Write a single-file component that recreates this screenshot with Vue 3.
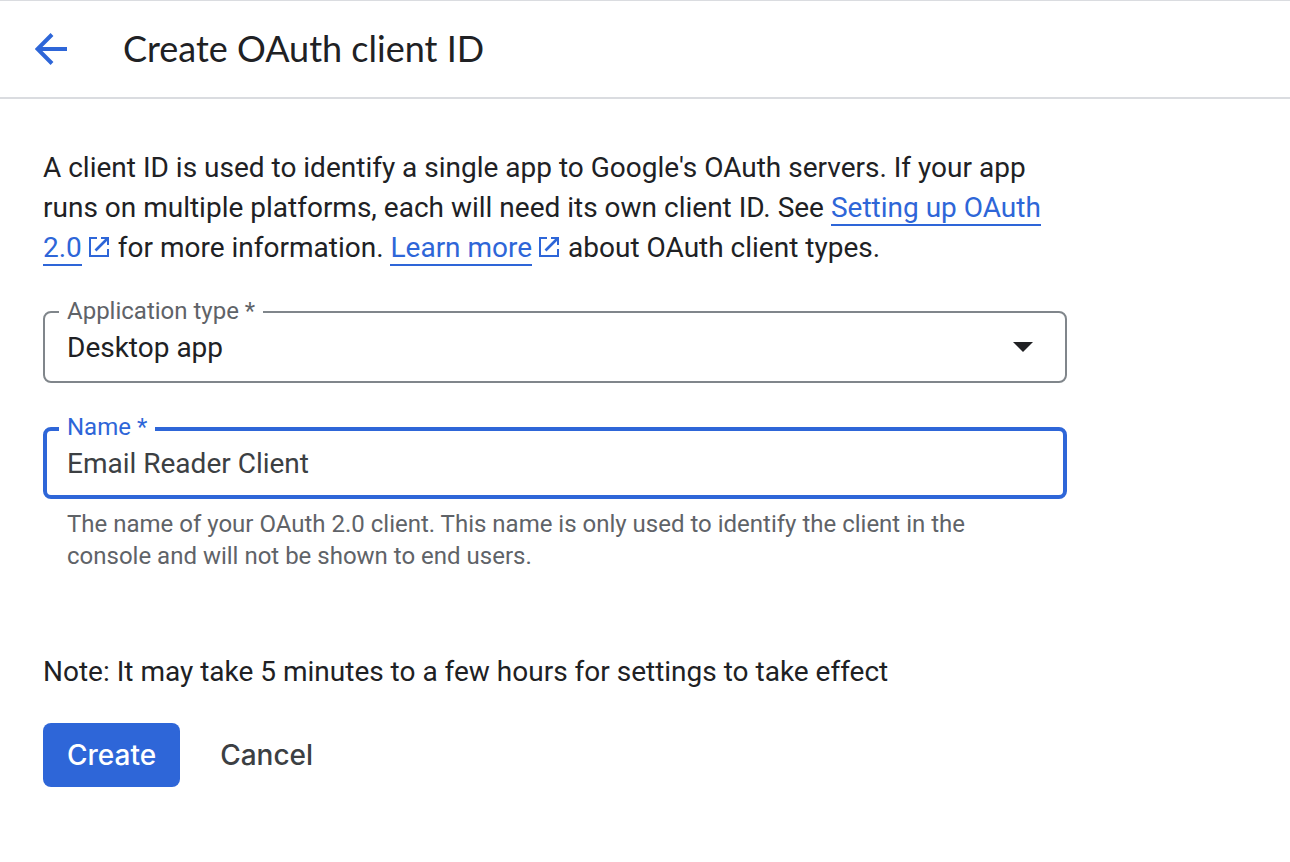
<script setup>
import { ref } from 'vue'

const appType = ref('Desktop app')
const clientName = ref('Email Reader Client')
</script>

<template>
  <div class="page">
    <header class="bar">
      <button class="back" type="button" aria-label="Back">
        <svg viewBox="0 0 32 32" width="32" height="32" aria-hidden="true">
          <path d="M32 16H3M17 1.500L2.500 16L17 30.500" fill="none" stroke="currentColor" stroke-width="4" />
        </svg>
      </button>
      <h1>Create OAuth client ID</h1>
    </header>

    <main class="content">
      <p class="intro">
        A client ID is used to identify a single app to Google's OAuth servers. If your app
        runs on multiple platforms, each will need its own client ID. See
        <a href="#setup">Setting up OAuth 2.0</a>
        <svg class="ext" viewBox="0 0 20 20" width="20" height="20" aria-hidden="true">
          <path d="M8 1H1V19H19V12M12 1H19V8" fill="none" stroke="currentColor" stroke-width="2" />
          <path d="M18.500 1.500L6.500 13.500" stroke="currentColor" stroke-width="2.600" />
        </svg>
        for more information. <a href="#learn">Learn more</a>
        <svg class="ext" viewBox="0 0 20 20" width="20" height="20" aria-hidden="true">
          <path d="M8 1H1V19H19V12M12 1H19V8" fill="none" stroke="currentColor" stroke-width="2" />
          <path d="M18.500 1.500L6.500 13.500" stroke="currentColor" stroke-width="2.600" />
        </svg>
        about OAuth client types.
      </p>

      <form @submit.prevent>
        <fieldset class="field">
          <legend><label for="app-type">Application type *</label></legend>
          <div class="select-row">
            <select id="app-type" v-model="appType">
              <option>Desktop app</option>
            </select>
            <svg class="caret" viewBox="0 0 20 10" width="20" height="10" aria-hidden="true">
              <path d="M0 0H20L10 10Z" fill="currentColor" />
            </svg>
          </div>
        </fieldset>

        <fieldset class="field active">
          <legend><label for="client-name">Name *</label></legend>
          <input id="client-name" v-model="clientName" type="text" aria-describedby="name-hint" />
        </fieldset>
        <p id="name-hint" class="hint">
          The name of your OAuth 2.0 client. This name is only used to identify the client in the
          console and will not be shown to end users.
        </p>

        <p class="note">Note: It may take 5 minutes to a few hours for settings to take effect</p>

        <div class="actions">
          <button class="create" type="submit">Create</button>
          <button class="cancel" type="button">Cancel</button>
        </div>
      </form>
    </main>
  </div>
</template>

<style>
body {
  background: #fff;
}
</style>

<style scoped>
.page {
  border-top: 1px solid #dadce0;
  color: #202124;
  font: 28px/40px Roboto, "Liberation Sans", sans-serif;
}
.bar {
  display: flex;
  align-items: center;
  gap: 56px;
  padding: 24px 35px;
  border-bottom: 2px solid #dadce0;
}
.back {
  display: flex;
  padding: 0;
  border: 0;
  background: none;
  color: #2e66d8;
}
h1 {
  margin: 0;
  padding-bottom: 2px;
  font: 400 36px/46px Lato, Roboto, sans-serif;
}
.content {
  max-width: 1024px;
  padding: 49px 43px;
}
p {
  margin: 0;
}
a {
  color: #2e66d8;
  text-decoration: none;
  border-bottom: 2px solid;
}
.ext {
  margin: 0 2px 0 7px;
  color: #2e66d8;
}
.field {
  min-width: 0;
  margin: 28px 0 0;
  padding: 0 14px 13px;
  border: 2px solid #80868b;
  border-radius: 8px;
}
.field.active {
  margin-top: 30px;
  padding: 0 12px 12px;
  border: 4px solid #2e66d8;
}
legend {
  padding: 0 8px 2px;
  color: #5f6368;
  font-size: 24px;
  line-height: 30px;
}
.active legend {
  padding-bottom: 4px;
  color: #2e66d8;
  line-height: 28px;
}
.select-row {
  position: relative;
}
select,
input {
  display: block;
  box-sizing: border-box;
  width: 100%;
  height: 40px;
  padding: 0 8px;
  border: 0;
  outline: 0;
  background: none;
  color: #202124;
  font: inherit;
  appearance: none;
}
input {
  height: 38px;
  color: #3c4043;
}
.caret {
  position: absolute;
  top: 14px;
  right: 18px;
  pointer-events: none;
}
.hint {
  margin-top: 9px;
  padding: 0 24px;
  color: #5f6368;
  font-size: 24px;
  line-height: 32px;
}
.note {
  margin-top: 80px;
}
.actions {
  display: flex;
  gap: 16px;
  margin-top: 31px;
}
.actions button {
  height: 64px;
  padding: 0 24px;
  border: 0;
  border-radius: 8px;
  background: none;
  color: #3c4043;
  font: 500 28px/40px Inter, Roboto, sans-serif;
}
.actions .create {
  background: #2e66d8;
  color: #fff;
}
</style>
